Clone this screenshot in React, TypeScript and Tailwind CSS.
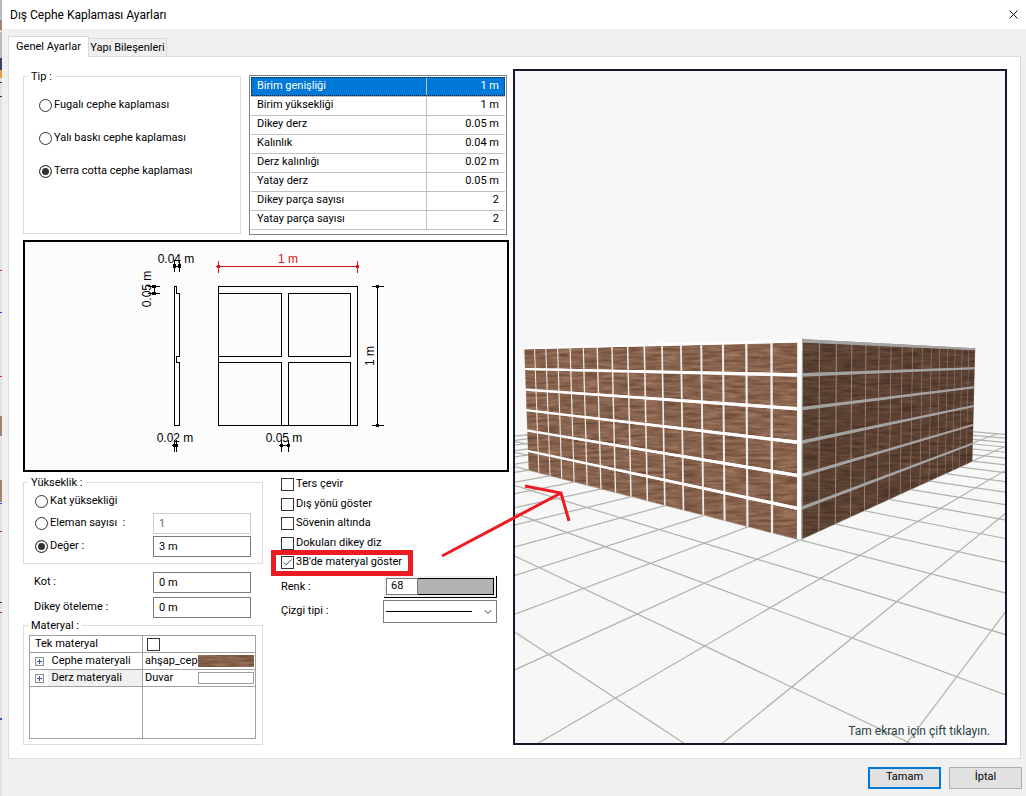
import type { ReactNode } from "react";
import { X, ChevronDown, Check } from "lucide-react";

const PARAMS = [
    ["Birim genişliği", "1 m"],
    ["Birim yüksekliği", "1 m"],
    ["Dikey derz", "0.05 m"],
    ["Kalınlık", "0.04 m"],
    ["Derz kalınlığı", "0.02 m"],
    ["Yatay derz", "0.05 m"],
    ["Dikey parça sayısı", "2"],
    ["Yatay parça sayısı", "2"],
];

const OPTIONS = ["Ters çevir", "Dış yönü göster", "Sövenin altında", "Dokuları dikey diz"];

type Vec = [number, number, number];

// camera: floor coordinates (u, w) and height t -> pixels of the preview
const project = ([u, w, t]: Vec) => {
    const k = 1 - 0.11164 * u + 0.1371 * w - 0.038 * t;
    const x = (637.3 - 11.21 * u + 163.8 * w - 30.1 * t) / k;
    const y = (614 - 40.17 * u + 49.33 * w - 296.4 * t) / k;
    return `${x.toFixed(1)},${y.toFixed(1)}`;
};

const poly = (...pts: Vec[]) => pts.map(project).join(" ");

const range = (from: number, to: number) => Array.from({ length: to - from + 1 }, (_, i) => from + i);

const GRID = [
    ...range(-14, 4).map((u) => poly([u, -2, 0], [u, 17, 0])),
    ...range(-2, 17).map((w) => poly([-14, w, 0], [4, w, 0])),
];

const CELLS = range(0, 15).flatMap((col) => range(0, 5).map((row) => ({ col, row })));

const LEFT_TILES = CELLS.map(({ col, row }) => {
    const a = -8 + col * 0.5;
    const b = a + 0.455;
    const lo = row / 6;
    const hi = (row + 0.9) / 6;
    return poly([a, 3, lo], [b, 3, lo], [b, 3, hi], [a, 3, hi]);
});

const RIGHT_TILES = CELLS.map(({ col, row }) => {
    const a = 3.04 + col * 0.4975;
    const b = a + 0.465;
    const lo = row / 6;
    const hi = (row + 0.91) / 6;
    return poly([0, a, lo], [0, b, lo], [0, b, hi], [0, a, hi]);
});

const Wood = ({ id, light }: { id: string; light: number }) => (
    <filter id={id} x="0" y="0" width="100%" height="100%" colorInterpolationFilters="sRGB">
        <feTurbulence type="fractalNoise" baseFrequency="0.05 0.35" numOctaves={3} seed={4} />
        <feColorMatrix
            values={`${0.3 * light} 0 0 0 ${0.38 * light}
                     ${0.27 * light} 0 0 0 ${0.25 * light}
                     ${0.24 * light} 0 0 0 ${0.18 * light}
                     0 0 0 0 1`}
        />
        <feComposite in2="SourceAlpha" operator="in" />
    </filter>
);

const Preview = () => (
    <div className="relative flex-1 min-w-0 border-2 border-[#15172b] bg-[#f7f7f7]">
        <svg viewBox="515 71 490 672" preserveAspectRatio="xMidYMid slice" className="absolute inset-0 w-full h-full">
            <defs>
                <Wood id="wood-lit" light={1} />
                <Wood id="wood-shade" light={0.66} />
            </defs>
            <g fill="none" stroke="#b0b0ac" strokeWidth="1.2">
                {GRID.map((points) => <polyline key={points} points={points} />)}
            </g>
            <polygon points={poly([-8, 3, 0], [0, 3, 0], [0, 3, 1], [-8, 3, 1])} fill="#eeecea" />
            <polygon points={poly([0, 3, 0], [0, 11, 0], [0, 11, 1], [0, 3, 1])} fill="#a58372" />
            <g filter="url(#wood-lit)">
                {LEFT_TILES.map((points) => <polygon key={points} points={points} />)}
            </g>
            <g filter="url(#wood-shade)">
                {RIGHT_TILES.map((points) => <polygon key={points} points={points} />)}
            </g>
            {range(1, 6).map((row) => {
                const lo = (row - 0.1) / 6;
                const hi = row / 6;
                return (
                    <g key={row}>
                        <polygon points={poly([-8, 3, lo], [0, 3, lo], [0, 3, hi], [-8, 3, hi])} fill="#fff" />
                        <polygon points={poly([0, 3, lo], [0, 11, lo], [0, 11, hi], [0, 3, hi])} fill="#a3a3a3" />
                    </g>
                );
            })}
            <polygon points="797.5,338 802,338 801.5,540 797,539" fill="#fff" />
            <polygon points="802,338 803,338 802.5,540 801.5,540" fill="#a3a3a3" />
        </svg>
        <p className="absolute right-[15px] bottom-[4px] text-[12px] leading-[16px] text-[#2a4343]">Tam ekran için çift tıklayın.</p>
    </div>
);

type DimProps = { x1: number; y1: number; x2: number; y2: number };

// dimension line with end ticks and dots
const Dim = ({ x1, y1, x2, y2 }: DimProps) => {
    const flat = y1 === y2;
    return (
        <g>
            <path d={`M${x1} ${y1}L${x2} ${y2}`} />
            {[[x1, y1], [x2, y2]].map(([x, y]) => (
                <g key={`${x}-${y}`}>
                    <path d={flat ? `M${x} ${y - 6}v12` : `M${x - 6} ${y}h12`} />
                    <circle cx={x} cy={y} r="1.5" fill="currentColor" />
                </g>
            ))}
        </g>
    );
};

const Drawing = () => (
    <div className="mt-[5px] border-2 border-black bg-[#fcfcfc]">
        <svg
            viewBox="25 242 482 228"
            className="block w-full font-['Liberation_Sans',sans-serif] text-[12px] text-black"
            fill="none"
            stroke="currentColor"
            shapeRendering="crispEdges"
        >
            <path d="M174.500 286.500h2v7h3v63h-3v6h3v63h-5z" />
            <path d="M218.500 286.500h139v139h-139zM218.500 293.500h63v63h-63M218.500 362.500h63v63M288.500 293.500h62v63h-62zM288.500 425.500v-63h62v63" />
            <Dim x1={174.5} y1={266} x2={179.5} y2={266} />
            <Dim x1={154} y1={286.5} x2={154} y2={293.5} />
            <Dim x1={174.5} y1={445.5} x2={176.5} y2={445.5} />
            <Dim x1={281.5} y1={445.5} x2={288.5} y2={445.5} />
            <Dim x1={377.5} y1={286.5} x2={377.5} y2={425.5} />
            <g className="text-[#dc1420]">
                <Dim x1={218.5} y1={266.5} x2={357.5} y2={266.5} />
            </g>
            <g stroke="none" fill="currentColor" textAnchor="middle">
                <text x="176" y="263">0.04 m</text>
                <text x="288" y="263" fill="#dc1420">1 m</text>
                <text x="175" y="442">0.02 m</text>
                <text x="284" y="442">0.05 m</text>
                <text transform="translate(151 289) rotate(-90)">0.05 m</text>
                <text transform="translate(374 356) rotate(-90)">1 m</text>
            </g>
        </svg>
    </div>
);

const Group = ({ title, className, children }: { title: string; className: string; children: ReactNode }) => (
    <fieldset className={`border border-[#dcdcdc] ${className}`}>
        <legend className="ml-[4px] px-[3px] leading-[15px]">{title}</legend>
        {children}
    </fieldset>
);

const Radio = ({ name, label, checked }: { name: string; label: string; checked?: boolean }) => (
    <label className="flex items-center gap-[2px]">
        <input
            type="radio"
            name={name}
            defaultChecked={checked}
            className="appearance-none size-[13px] rounded-full border border-[#333] bg-white checked:bg-[#333] checked:shadow-[inset_0_0_0_2px_white]"
        />
        {label}
    </label>
);

const Tick = ({ label, checked }: { label: string; checked?: boolean }) => (
    <label className="flex items-center gap-[2px] h-[13px]">
        <span className="relative size-[13px]">
            <input type="checkbox" defaultChecked={checked} className="peer block appearance-none size-[13px] border border-[#333] bg-white" />
            <Check className="hidden peer-checked:block absolute inset-0 size-[13px] p-px text-[#333]" strokeWidth={2} />
        </span>
        {label}
    </label>
);

const BOX = "w-[98px] h-[21px] border border-[#7a7a7a] bg-white px-[5px] disabled:border-[#ccc] disabled:text-[#6d6d6d]";

const Expander = () => (
    <svg viewBox="0 0 9 9" className="ml-[5px] size-[9px]" fill="none" shapeRendering="crispEdges">
        <path d="M.5.5h8v8h-8z" stroke="#8e8f8f" fill="#f7f7f7" />
        <path d="M2 4.500h5M4.500 2v5" stroke="#3a5795" />
    </svg>
);

const Materials = () => (
    <table className="mt-[2px] ml-[5px] w-[227px] h-[104px] table-fixed border border-[#a0a0a0]">
        <colgroup>
            <col className="w-[18px]" />
            <col className="w-[95px]" />
            <col />
        </colgroup>
        <tbody>
            <tr className="h-[17px] border-b border-[#a0a0a0]">
                <td colSpan={2} className="pl-[5px] leading-[16px] border-r border-[#a0a0a0]">Tek materyal</td>
                <td className="pl-[4px]">
                    <input type="checkbox" aria-label="Tek materyal" className="block appearance-none size-[13px] border border-[#333] bg-white" />
                </td>
            </tr>
            <tr className="h-[17px] border-b border-[#a0a0a0]">
                <td><Expander /></td>
                <td className="pl-[4px] leading-[16px] border-r border-[#a0a0a0]">Cephe materyali</td>
                <td className="pl-[2px]">
                    <div className="flex items-center gap-[2px]">
                        <span className="w-[51px] whitespace-nowrap leading-[16px]">ahşap_cep</span>
                        <svg className="w-[56px] h-[12px]">
                            <rect width="100%" height="100%" filter="url(#wood-lit)" />
                        </svg>
                    </div>
                </td>
            </tr>
            <tr className="h-[17px] border-b border-[#a0a0a0]">
                <td><Expander /></td>
                <td className="pl-[4px] leading-[16px] border-r border-[#a0a0a0] bg-[#f0f0f0]">Derz materyali</td>
                <td className="pl-[2px]">
                    <div className="flex items-center gap-[2px]">
                        <span className="w-[51px] leading-[16px]">Duvar</span>
                        <span className="w-[56px] h-[12px] border border-[#a0a0a0]" />
                    </div>
                </td>
            </tr>
            <tr>
                <td colSpan={2} className="border-r border-[#a0a0a0]" />
                <td />
            </tr>
        </tbody>
    </table>
);

const Settings = () => (
    <div className="w-[486px] shrink-0">
        <div className="flex gap-[8px]">
            <Group title="Tip :" className="w-[218px] h-[165px]">
                <div className="flex flex-col gap-[17px] pt-[13px] pl-[15px] leading-[16px]">
                    <Radio name="type" label="Fugalı cephe kaplaması" />
                    <Radio name="type" label="Yalı baskı cephe kaplaması" />
                    <Radio name="type" label="Terra cotta cephe kaplaması" checked />
                </div>
            </Group>
            <div className="mt-[6px] w-[258px] h-[160px] border border-[#82828c] p-px">
                <table className="w-full">
                    <tbody>
                        {PARAMS.map(([name, value]) => (
                            <tr key={name} className="h-[19px] border-b border-[#c0c0c0] first:bg-[#0078d7] first:text-white first:outline-1 first:-outline-offset-1 first:outline-dotted first:outline-[#123]">
                                <td className="pl-[6px] w-[175px] border-r border-[#c0c0c0]">{name}</td>
                                <td className="pr-[6px] text-right">{value}</td>
                            </tr>
                        ))}
                    </tbody>
                </table>
            </div>
        </div>

        <Drawing />

        <div className="flex gap-[18px] mt-[3px]">
            <div className="w-[240px]">
                <Group title="Yükseklik :" className="h-[89px]">
                    <div className="pl-[11px] pr-[11px]">
                        <div className="flex items-center h-[23px]">
                            <Radio name="height" label="Kat yüksekliği" />
                        </div>
                        <div className="flex items-center justify-between h-[21px] whitespace-pre">
                            <Radio name="height" label="Eleman sayısı  :" />
                            <input aria-label="Eleman sayısı" className={BOX} defaultValue="1" disabled />
                        </div>
                        <div className="flex items-center justify-between mt-[2px]">
                            <Radio name="height" label="Değer :" checked />
                            <input aria-label="Değer" className={BOX} defaultValue="3 m" />
                        </div>
                    </div>
                </Group>
                <div className="flex flex-col gap-[4px] mt-[8px] pl-[11px] pr-[12px]">
                    <label className="flex items-center justify-between">
                        Kot : <input className={BOX} defaultValue="0 m" />
                    </label>
                    <label className="flex items-center justify-between">
                        Dikey öteleme : <input className={BOX} defaultValue="0 m" />
                    </label>
                </div>
                <Group title="Materyal :" className="h-[127px]">
                    <Materials />
                </Group>
            </div>

            <div className="w-[216px] pt-[3px]">
                <div className="flex flex-col justify-between h-[91px]">
                    {OPTIONS.map((option) => <Tick key={option} label={option} />)}
                    <div className="relative">
                        <Tick label="3B'de materyal göster" checked />
                        <span className="absolute -left-[10px] -top-[6px] w-[142px] h-[26px] border-[5px] border-[#ed1c24] pointer-events-none" />
                    </div>
                </div>
                <label className="flex items-center justify-between mt-[7px]">
                    Renk :
                    <span className="flex w-[113px] h-[22px] border-r border-b border-black bg-[#f0f0f0] p-[2px]">
                        <input defaultValue="68" className="w-[32px] border border-[#7a7a7a] bg-white px-[4px]" />
                        <span className="flex-1 border border-l-0 border-black bg-[#b2b2b2]" />
                    </span>
                </label>
                <label className="flex items-center justify-between mt-[2px]">
                    Çizgi tipi :
                    <span className="relative">
                        <select aria-label="Çizgi tipi" className="block appearance-none w-[114px] h-[23px] border border-[#7a7a7a] bg-white" />
                        <span className="absolute left-[3px] top-[11px] w-[86px] h-px bg-black" />
                        <ChevronDown className="absolute right-[3px] top-[6px] size-[12px] text-[#444]" strokeWidth={2} />
                    </span>
                </label>
            </div>
        </div>
    </div>
);

// sliver of the window lying behind the dialog
const Backdrop = () => (
    <svg viewBox="0 0 2 796" preserveAspectRatio="none" className="w-[2px] shrink-0 self-stretch bg-[#e2e2e4]">
        <path d="M0 0h2v30h-2zM0 32h2v26h-2z" fill="#b5bac4" />
        <path d="M0 20h2v10h-2zM0 416h2v20h-2zM0 480h2v22h-2z" fill="#a3826f" />
        <path d="M0 58h2v12h-2z" fill="#3b3f66" />
        <path d="M0 70h2v8h-2z" fill="#f0a030" />
        <path d="M0 82h2v1h-2zM0 96h2v1h-2zM0 602h2v1h-2z" fill="#333" />
        <path d="M0 270h2v1h-2zM0 376h2v1h-2zM0 531h2v1h-2zM0 612h2v1h-2z" fill="#c33" />
        <path d="M0 312h2v1h-2zM0 503h2v1h-2zM0 718h2v2h-2z" fill="#2c4fd0" />
    </svg>
);

const App = () => (
    <div className="flex min-h-screen bg-[#f0f0f0] font-[Roboto,sans-serif] text-[11px] text-black">
        <Backdrop />
        <main className="flex-1 flex flex-col min-w-0">
            <header className="flex items-center justify-between h-[29px] bg-white pl-[8px] pr-[5px]">
                <h1 className="text-[12px]">Dış Cephe Kaplaması Ayarları</h1>
                <button aria-label="Kapat"><X className="size-[15px]" strokeWidth={1.5} /></button>
            </header>

            <nav className="flex items-end pl-[6px] pt-[7px] leading-[18px] whitespace-nowrap">
                <button className="relative -mb-px w-[81px] h-[21px] border border-b-0 border-[#d9d9d9] bg-white">Genel Ayarlar</button>
                <button className="w-[78px] h-[18px] border border-l-0 border-b-0 border-[#d9d9d9]">Yapı Bileşenleri</button>
            </nav>

            <section className="flex-1 flex gap-[4px] ml-[6px] mr-[5px] border border-[#dcdcdc] bg-white pt-[12px] pb-[13px] pl-[14px] pr-[13px]">
                <Settings />
                <Preview />
            </section>

            <footer className="flex items-center justify-end gap-[8px] h-[37px] pr-[4px]">
                <button className="w-[73px] h-[22px] border-2 border-[#0078d7] bg-[#e1e1e1]">Tamam</button>
                <button className="w-[73px] h-[22px] border border-[#adadad] bg-[#e1e1e1]">İptal</button>
            </footer>
        </main>

        <svg viewBox="0 0 132 74" className="absolute left-[440px] top-[484px] w-[132px] h-[74px] pointer-events-none" fill="none" stroke="#ed1c24" strokeWidth="3">
            <path d="M2 72L121 9M85 2L121 9L129 37" />
        </svg>
    </div>
);

export default App;
